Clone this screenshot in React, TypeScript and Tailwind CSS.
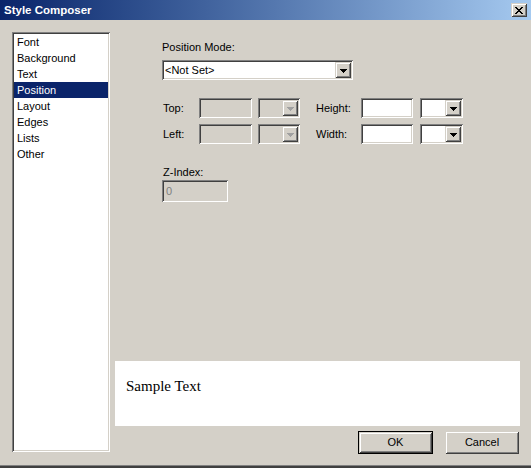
import React from "react";

const sunken =
  "shadow-[inset_1px_1px_0_#808080,inset_-1px_-1px_0_#ffffff,inset_2px_2px_0_#404040,inset_-2px_-2px_0_#d4d0c8]";
const raised =
  "shadow-[inset_1px_1px_0_#d4d0c8,inset_-1px_-1px_0_#404040,inset_2px_2px_0_#ffffff,inset_-2px_-2px_0_#808080]";

function Arrow({ color }: { color: string }) {
  return (
    <svg width="7" height="4" viewBox="0 0 7 4" shapeRendering="crispEdges">
      <rect x="0" y="0" width="7" height="1" fill={color} />
      <rect x="1" y="1" width="5" height="1" fill={color} />
      <rect x="2" y="2" width="3" height="1" fill={color} />
      <rect x="3" y="3" width="1" height="1" fill={color} />
    </svg>
  );
}

function ComboButton({ disabled }: { disabled?: boolean }) {
  return (
    <div className={`w-[16px] h-full bg-[#d4d0c8] flex items-center justify-center ${raised}`}>
      <div className="translate-x-[0px] translate-y-[1px]">
        <Arrow color={disabled ? "#a0a0a0" : "#000000"} />
      </div>
    </div>
  );
}

function Combo({ disabled, w }: { disabled?: boolean; w: string }) {
  return (
    <div
      className={`${w} h-[20px] p-[2px] flex justify-end ${sunken} ${
        disabled ? "bg-[#d4d0c8]" : "bg-white"
      }`}
    >
      <ComboButton disabled={disabled} />
    </div>
  );
}

function TextBox({ disabled, w }: { disabled?: boolean; w: string }) {
  return (
    <div className={`${w} h-[20px] ${sunken} ${disabled ? "bg-[#d4d0c8]" : "bg-white"}`} />
  );
}

const items = ["Font", "Background", "Text", "Position", "Layout", "Edges", "Lists", "Other"];

export default function App() {
  return (
    <div className="w-[531px] h-[468px] bg-[#d4d0c8] flex flex-col overflow-hidden font-['Liberation_Sans',Arial,sans-serif] text-[11px] text-black">
      {/* Title bar */}
      <div className="h-[20px] flex items-center justify-between bg-gradient-to-r from-[#0a246a] to-[#a6caf0] pl-[4px] pr-[4px]">
        <span className="text-white font-bold text-[11.5px] leading-[20px]">Style Composer</span>
        <div className={`w-[16px] h-[14px] bg-[#d4d0c8] flex items-center justify-center ${raised}`}>
          <svg width="8" height="7" viewBox="0 0 8 7" shapeRendering="crispEdges">
            <path d="M0 0h2v1H0zM6 0h2v1H6zM1 1h2v1H1zM5 1h2v1H5zM2 2h4v1H2zM3 3h2v1H3zM2 4h4v1H2zM1 5h2v1H1zM5 5h2v1H5zM0 6h2v1H0zM6 6h2v1H6z" fill="#000" />
          </svg>
        </div>
      </div>

      {/* Body */}
      <div className="flex-1 flex">
        {/* List */}
        <div className={`ml-[12px] mt-[12px] w-[98px] h-[420px] bg-white p-[2px] ${sunken}`}>
          {items.map((it) => (
            <div
              key={it}
              className={`h-[16px] leading-[16px] pl-[3px] ${
                it === "Position" ? "bg-[#0a246a] text-white" : ""
              }`}
            >
              {it}
            </div>
          ))}
        </div>

        {/* Right column */}
        <div className="ml-[5px] w-[405px] flex flex-col">
          <div className="pl-[47px] pt-[21px]">
            <div className="h-[13px] leading-[13px]">Position Mode:</div>
            <div className={`mt-[6px] w-[191px] h-[20px] bg-white p-[2px] flex items-center ${sunken}`}>
              <span className="flex-1 pl-[1px] leading-[16px]">&lt;Not Set&gt;</span>
              <ComboButton />
            </div>

            <div className="mt-[18px] flex flex-col gap-[6px]">
              {[
                ["Top:", "Height:"],
                ["Left:", "Width:"],
              ].map(([a, b]) => (
                <div key={a} className="flex items-center h-[20px]">
                  <span className="w-[37px] pl-[1px]">{a}</span>
                  <TextBox disabled w="w-[53px]" />
                  <div className="ml-[6px]">
                    <Combo disabled w="w-[42px]" />
                  </div>
                  <span className="ml-[16px] w-[45px]">{b}</span>
                  <TextBox w="w-[52px]" />
                  <div className="ml-[7px]">
                    <Combo w="w-[43px]" />
                  </div>
                </div>
              ))}
            </div>

            <div className="mt-[22px] h-[13px] leading-[13px] pl-[1px]">Z-Index:</div>
            <div className={`mt-[1px] w-[66px] h-[22px] bg-[#d4d0c8] pl-[4px] pt-[3px] leading-[16px] text-[#808080] ${sunken}`}>
              0
            </div>
          </div>

          <div className="flex-1" />

          <div className="h-[65px] bg-white pl-[11px] pt-[16px] font-['Liberation_Serif','Times_New_Roman',serif] text-[15px] leading-[18px]">
            Sample Text
          </div>

          <div className="mt-[5px] mb-[11px] mr-[1px] flex justify-end gap-[12px]">
            <div className="w-[75px] h-[23px] border border-black">
              <div className={`w-full h-full bg-[#d4d0c8] flex items-center justify-center ${raised}`}>
                OK
              </div>
            </div>
            <div className={`w-[74px] h-[23px] bg-[#d4d0c8] flex items-center justify-center ${raised}`}>
              Cancel
            </div>
          </div>
        </div>
      </div>
      <div className="h-[3px] bg-[#404040] border-t border-[#808080]" />
    </div>
  );
}
